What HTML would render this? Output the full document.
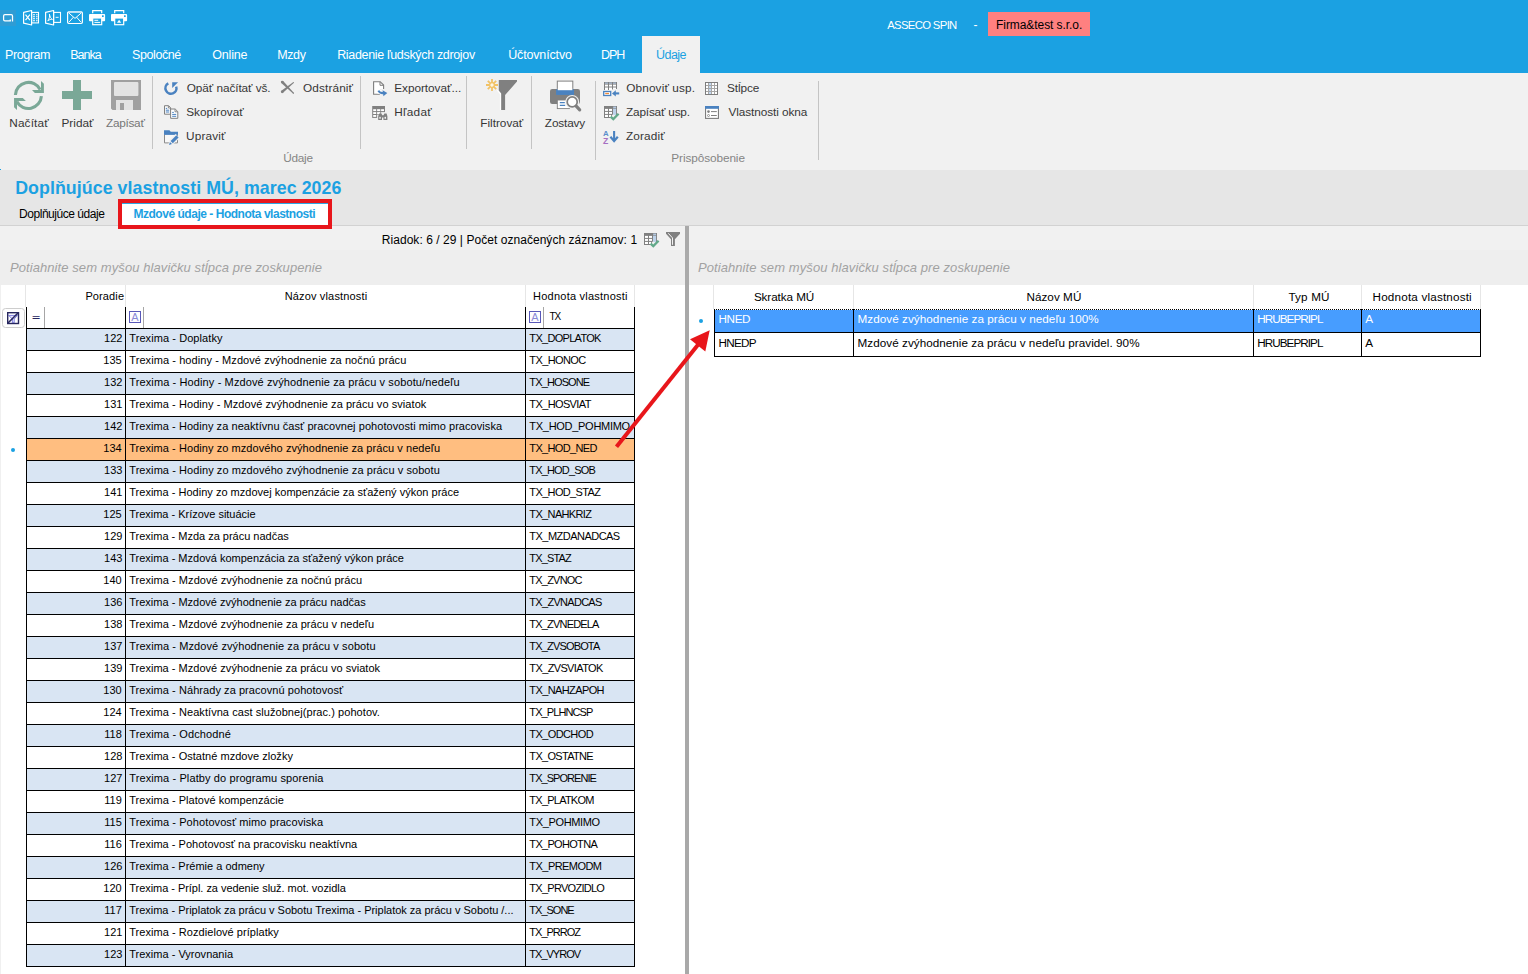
<!DOCTYPE html>
<html lang="sk"><head><meta charset="utf-8"><title>ASSECO SPIN - Doplňujúce vlastnosti MÚ</title>
<style>
html,body{margin:0;padding:0}
body{width:1528px;height:974px;position:relative;overflow:hidden;background:#fff;font-family:'Liberation Sans',sans-serif;font-size:12px;color:#000}
.t{position:absolute;white-space:pre;display:block;height:20px;line-height:20px}
.b{position:absolute;display:block}
svg{position:absolute;overflow:visible}
</style></head><body>

<div class="b" style="left:0px;top:0px;width:1528px;height:73px;background:#1ba1e2;"></div>
<div class="b" style="left:0px;top:73px;width:1528px;height:97px;background:#f1f1f1;"></div>
<div class="b" style="left:0px;top:170px;width:1528px;height:55px;background:#e6e6e6;"></div>
<div class="b" style="left:0px;top:225px;width:1528px;height:1px;background:#d2d2d2;"></div>
<div class="b" style="left:0px;top:226px;width:1528px;height:24px;background:#f1f1f1;"></div>
<div class="b" style="left:0px;top:250px;width:1528px;height:35px;background:#eeeeee;"></div>
<div class="b" style="left:0px;top:285px;width:1px;height:689px;background:#f0f0f0;"></div>
<div class="b" style="left:0px;top:169px;width:1px;height:1px;background:#1ba1e2;"></div>
<div class="b" style="left:0px;top:10px;width:16px;height:16px;background:#2f9cd4;"></div>
<svg style="left:0px;top:10px" width="16" height="16" viewBox="0 0 16 16"><path d="M3.6 5.9Q3.6 4.6 4.9 4.6H11.2Q12.5 4.6 12.5 5.9V11.6M3.6 5.9V9.6Q3.6 10.9 4.9 10.9H10.3V9.6" fill="none" stroke="#fff" stroke-width="1.25"/></svg>
<svg style="left:23px;top:10px" width="16" height="16" viewBox="0 0 16 16"><path d="M0.6 2.3L8.6 0.5V15L0.6 13.2Z" fill="none" stroke="#fff" stroke-width="1.2" stroke-linejoin="round"/><path d="M2.5 4.7L6.9 10.1M6.9 4.7L2.5 10.1" stroke="#fff" stroke-width="1.2" fill="none"/><rect x="8.6" y="2.4" width="6.9" height="10.5" fill="none" stroke="#fff" stroke-width="1.1"/><path d="M10 4.7h2M13 4.7h1.6M10 6.7h2M13 6.7h1.6M10 8.7h2M13 8.7h1.6M10 10.7h2M13 10.7h1.6" stroke="#fff" stroke-width="1.1"/></svg>
<svg style="left:45px;top:10px" width="16" height="16" viewBox="0 0 16 16"><path d="M0.6 2.3L8.6 0.5V15L0.6 13.2Z" fill="none" stroke="#fff" stroke-width="1.2" stroke-linejoin="round"/><path d="M4.4 4.2c.8 2.2-.4 5-1.6 6.6c1.6-1.2 3.2-1.6 4.6-1.4c-1.4-.8-2.6-2.6-3-5.2z" fill="none" stroke="#fff" stroke-width="1"/><rect x="8.6" y="2.4" width="6.9" height="10" fill="none" stroke="#fff" stroke-width="1.1"/><path d="M10.6 7.4h3" stroke="#cfeaf8" stroke-width="1.2"/></svg>
<svg style="left:67px;top:11px" width="16" height="14" viewBox="0 0 16 14"><rect x="0.6" y="0.9" width="14.8" height="11.6" rx="1.2" fill="none" stroke="#fff" stroke-width="1.2"/><path d="M1 1.2h14" stroke="#bfe3f6" stroke-width="1.4"/><path d="M1.6 1.8L8 7.4L14.4 1.8M1.8 11.4L6.4 6.2M14.2 11.4L9.6 6.2" fill="none" stroke="#fff" stroke-width="1"/></svg>
<svg style="left:89px;top:10px" width="16" height="16" viewBox="0 0 16 16"><path d="M3.7 3.2V0.7H12.7V3.2" fill="none" stroke="#fff" stroke-width="1.2"/><rect x="0" y="4" width="16.1" height="7.2" rx="0.9" fill="#fff"/><rect x="13" y="5.3" width="1.7" height="1.7" fill="#1ba1e2"/><rect x="3.7" y="8" width="9" height="6.7" fill="#1ba1e2" stroke="#fff" stroke-width="1.2"/><path d="M5.4 10.3h3.8M5.4 12.4h5.8" stroke="#fff" stroke-width="1"/></svg>
<svg style="left:111px;top:10px" width="16" height="16" viewBox="0 0 16 16"><path d="M3.7 3.2V0.7H12.7V3.2" fill="none" stroke="#fff" stroke-width="1.2"/><rect x="0" y="4" width="16.1" height="7.2" rx="0.9" fill="#fff"/><rect x="13" y="5.3" width="1.7" height="1.7" fill="#1ba1e2"/><rect x="3.7" y="8" width="9" height="6.7" fill="#1ba1e2" stroke="#fff" stroke-width="1.2"/><path d="M6 12.8L8.1 9.8L10.2 12.8Z" fill="#fff"/></svg>
<svg style="left:13px;top:80px" width="32" height="32" viewBox="0 0 32 32"><path d="M2.4 15A13.1 13.1 0 0 1 27.2 9.6" fill="none" stroke="#7aa897" stroke-width="3.1"/><path d="M28 0.9L30.9 3.8V13H21.9L19 9.9H28Z" fill="#7aa897"/><path d="M28.4 16.1A13.1 13.1 0 0 1 3.8 21.6" fill="none" stroke="#7aa897" stroke-width="3.1"/><path d="M1.05 18H9.8L12.9 21H4V29.9L1.05 27.2Z" fill="#7aa897"/></svg>
<div class="b" style="left:73px;top:80px;width:8px;height:30px;background:#7aa897;"></div>
<div class="b" style="left:62px;top:91px;width:30px;height:8px;background:#7aa897;"></div>
<svg style="left:111px;top:80px" width="30" height="30" viewBox="0 0 30 30"><path d="M0 0H30V30H1.6L0 28.4Z" fill="#a0a0a0"/><rect x="3" y="2" width="24.4" height="14" rx="1" fill="#e3e3e3"/><rect x="5" y="20" width="17" height="10" fill="#e3e3e3"/><rect x="9" y="23" width="4" height="7" fill="#a0a0a0"/></svg>
<svg style="left:164px;top:81px" width="16" height="16" viewBox="0 0 16 16"><path d="M12.2 5.6A5.5 5.5 0 1 1 4.3 2.4" fill="none" stroke="#4a82c0" stroke-width="2.5"/><path d="M8.2 1.2H14.1L8.2 7.1Z" fill="#4a82c0"/></svg>
<svg style="left:279.4px;top:80.4px" width="16" height="16" viewBox="0 0 16 16"><polygon points="2.25,2.95 13.98,13.62 14.82,12.78 4.15,1.05" fill="#808080"/><circle cx="3.2" cy="2" r="1.35" fill="#808080"/><circle cx="14.4" cy="13.2" r="0.6" fill="#808080"/><polygon points="4.06,12.84 14.72,2.99 14.08,2.21 2.34,10.76" fill="#808080"/><circle cx="3.2" cy="11.8" r="1.35" fill="#808080"/><circle cx="14.4" cy="2.6" r="0.5" fill="#808080"/></svg>
<svg style="left:164px;top:105px" width="16" height="16" viewBox="0 0 16 16"><path d="M0.5 0.7H4.6L6.6 2.7V9.2H0.5Z" fill="#fbfbfb" stroke="#808080"/><path d="M4.4 0.9V3H6.4" fill="none" stroke="#808080" stroke-width="0.9"/><path d="M1.8 3.4h1.4M1.8 5.2h3.4M1.8 7h3.4" stroke="#4a82c0" stroke-width="1"/><path d="M6.6 4H11.2L13.8 6.6V13.3H6.6Z" fill="#fff" stroke="#808080"/><path d="M11 4.2V6.8H13.6" fill="none" stroke="#808080" stroke-width="0.9"/><path d="M8.2 7.4h1.6M8.2 9.4h4M8.2 11.3h4" stroke="#4a82c0" stroke-width="1"/></svg>
<svg style="left:164px;top:130px" width="16" height="16" viewBox="0 0 16 16"><path d="M0 0.2H5.4L6.8 1.8H14V4.9H0Z" fill="#4a82c0"/><path d="M0.5 4.9V12.9H13.5V4.9" fill="#f8f8f8" stroke="#8a8a8a"/><path d="M4.2 14.6L5.8 9.8L11.6 4L15.6 8L9.8 13.8Z" fill="#f1f1f1"/><path d="M6.6 11L12.4 5.2L14.6 7.4L8.8 13.2Z" fill="#4a82c0"/><path d="M5.9 11.9L8 14L5 14.9Z" fill="#4a82c0"/></svg>
<svg style="left:372px;top:81px" width="16" height="16" viewBox="0 0 16 16"><path d="M1.6 0.7H8.2L11.6 4.1V13.3H1.6Z" fill="#fff" stroke="#7d7d7d" stroke-width="1.1"/><path d="M8 0.9V4.3H11.4" fill="none" stroke="#7d7d7d" stroke-width="1"/><rect x="7.8" y="8" width="8" height="7.6" fill="#f1f1f1"/><rect x="5.4" y="9" width="4" height="3.6" fill="#fff"/><path d="M6.4 9.6C7.4 11.8 9.6 12.4 12.4 12" fill="none" stroke="#4a82c0" stroke-width="2.1"/><path d="M10.6 9.2L15.3 12L11.4 15.2Z" fill="#4a82c0"/></svg>
<svg style="left:372px;top:106px" width="16" height="16" viewBox="0 0 16 16"><rect x="0.2" y="0" width="12.8" height="11.9" fill="#808080"/><rect x="1.2" y="3.2" width="3" height="1.9" fill="#fff"/><rect x="5.1" y="3.2" width="3.2" height="1.9" fill="#fff"/><rect x="9.1" y="3.2" width="2.9" height="1.9" fill="#fff"/><rect x="1.2" y="6.1" width="3" height="1.9" fill="#fff"/><rect x="5.1" y="6.1" width="3.2" height="1.9" fill="#fff"/><rect x="9.1" y="6.1" width="3.9" height="3" fill="#f1f1f1"/><rect x="1.2" y="9" width="3" height="1.9" fill="#fff"/><rect x="5.1" y="8.6" width="8" height="3.6" fill="#f1f1f1"/><path d="M7.2 7.6h2.2l.9 1.6h1.2l.9-1.6h2.2l.8 2.6V14H11.4V11.6H10V14H6.2V10.2Z" fill="#808080"/><rect x="7.3" y="10.8" width="1.5" height="2" rx="0.6" fill="#f4f4f4"/><rect x="12.5" y="10.8" width="1.5" height="2" rx="0.6" fill="#f4f4f4"/></svg>
<svg style="left:485px;top:79px" width="33" height="32" viewBox="0 0 33 32"><path d="M13.8 1H32V2.6L20.1 16V31H16.1V14.4L13.8 11.8Z" fill="#808080"/><path d="M12.2 11.2L15.5 14.8V31" fill="none" stroke="#fff" stroke-width="1.2"/><g stroke="#f1c266" stroke-width="1.8" fill="none"><path d="M7 0V12M1 6H13M2.8 1.8L11.2 10.2M11.2 1.8L2.8 10.2"/></g><circle cx="7" cy="6" r="2.3" fill="#fdf6e4" stroke="#f1c266" stroke-width="1.2"/></svg>
<svg style="left:548px;top:80px" width="34" height="32" viewBox="0 0 34 32"><rect x="2" y="9" width="30" height="15" rx="2.2" fill="#808080"/><rect x="9.3" y="1.1" width="15.5" height="9" fill="#fff" stroke="#808080" stroke-width="1"/><rect x="8.1" y="9.4" width="17.9" height="5.5" fill="#4a82c0"/><rect x="9.8" y="8.6" width="14.5" height="1.6" fill="#fff"/><rect x="9.3" y="20" width="12.2" height="8.6" fill="#fff" stroke="#808080" stroke-width="0.9"/><path d="M11.8 22.6h5M11.8 25.4h5.4" stroke="#4a82c0" stroke-width="1.1"/><circle cx="24.2" cy="21.9" r="7" fill="#f1f1f1"/><path d="M27.8 25.6L31.7 29.8" stroke="#808080" stroke-width="3.2" stroke-linecap="round"/><circle cx="24.2" cy="21.9" r="5" fill="#fff" stroke="#808080" stroke-width="1.7"/></svg>
<svg style="left:603px;top:81px" width="17" height="16" viewBox="0 0 17 16"><rect x="1" y="1" width="13" height="8" fill="#808080"/><rect x="2" y="1.6" width="3" height="1" fill="#b9d0ec"/><rect x="6" y="1.6" width="3" height="1" fill="#b9d0ec"/><rect x="10" y="1.6" width="3" height="1" fill="#b9d0ec"/><rect x="2" y="3.6" width="3" height="1.9" fill="#fff"/><rect x="6" y="3.6" width="3" height="1.9" fill="#fff"/><rect x="10" y="3.6" width="3" height="1.9" fill="#fff"/><rect x="2" y="6.5" width="3" height="2.6" fill="#fff"/><rect x="6" y="6.5" width="3" height="2.6" fill="#fff"/><rect x="10" y="6.5" width="3" height="1.5" fill="#fff"/><rect x="9.4" y="8" width="5" height="1.4" fill="#f1f1f1"/><rect x="0.7" y="10.5" width="7" height="4" fill="#fff" stroke="#4a82c0" stroke-width="1.3"/><path d="M2.2 12.5h3.8" stroke="#f08a3a" stroke-width="1.3"/><path d="M16.2 12.4H11.6" stroke="#4a82c0" stroke-width="2.1"/><path d="M9 12.4L12.8 9.2V15.6Z" fill="#4a82c0"/></svg>
<svg style="left:604px;top:106px" width="16" height="16" viewBox="0 0 16 16"><rect x="0" y="0" width="13" height="12" fill="#808080"/><rect x="9.2" y="0.6" width="2.9" height="1.3" fill="#b9d0ec"/><rect x="1" y="2.9" width="3" height="2" fill="#fff"/><rect x="5" y="2.9" width="3" height="2" fill="#fff"/><rect x="1" y="5.9" width="3" height="2" fill="#fff"/><rect x="5" y="5.9" width="3" height="2" fill="#fff"/><rect x="1" y="8.9" width="3" height="2.1" fill="#fff"/><rect x="5" y="8.9" width="2" height="2.1" fill="#fff"/><rect x="9" y="2.6" width="3.1" height="6.6" fill="#bcd2ea"/><path d="M5.6 12.4L8.6 8.6L13.4 9.4V12.4Z" fill="#f1f1f1"/><path d="M6.6 10.6L9.3 13.1L14.6 7.8" fill="none" stroke="#62a98a" stroke-width="2.3"/></svg>
<svg style="left:603px;top:129px" width="17" height="16" viewBox="0 0 17 16"><text x="0" y="6.9" font-family="Liberation Sans, sans-serif" font-size="7.8" font-weight="bold" fill="#5b8fcc">A</text><text x="0" y="14.6" font-family="Liberation Sans, sans-serif" font-size="8.6" font-weight="bold" fill="#a56fc2">Z</text><path d="M11.1 2V11.4" stroke="#4a82c0" stroke-width="2.1"/><path d="M7.4 7.8L11.1 12L14.8 7.8" fill="none" stroke="#4a82c0" stroke-width="2.2"/></svg>
<svg style="left:705px;top:82px" width="14" height="14" viewBox="0 0 14 14"><rect x="0" y="0" width="13" height="13" fill="#a6a6a6"/><rect x="0.5" y="0.5" width="12" height="12" fill="none" stroke="#7d7d7d" stroke-width="1"/><rect x="1" y="1" width="2" height="2" fill="#fff"/><rect x="4" y="1" width="2" height="2" fill="#c2d9f3"/><rect x="7" y="1" width="2" height="2" fill="#fff"/><rect x="10" y="1" width="2" height="2" fill="#fff"/><rect x="1" y="4" width="2" height="2" fill="#fff"/><rect x="4" y="4" width="2" height="2" fill="#c2d9f3"/><rect x="7" y="4" width="2" height="2" fill="#fff"/><rect x="10" y="4" width="2" height="2" fill="#fff"/><rect x="1" y="7" width="2" height="2" fill="#fff"/><rect x="4" y="7" width="2" height="2" fill="#c2d9f3"/><rect x="7" y="7" width="2" height="2" fill="#fff"/><rect x="10" y="7" width="2" height="2" fill="#fff"/><rect x="1" y="10" width="2" height="2" fill="#fff"/><rect x="4" y="10" width="2" height="2" fill="#c2d9f3"/><rect x="7" y="10" width="2" height="2" fill="#fff"/><rect x="10" y="10" width="2" height="2" fill="#fff"/></svg>
<svg style="left:705px;top:106px" width="15" height="14" viewBox="0 0 15 14"><rect x="0.55" y="0.6" width="12.9" height="11.8" fill="#fff" stroke="#7d7d7d" stroke-width="1.1"/><rect x="0" y="0" width="14" height="2.8" fill="#4a82c0"/><circle cx="3.5" cy="5.6" r="1.3" fill="#808080"/><circle cx="3.5" cy="9.5" r="1" fill="#fff" stroke="#808080" stroke-width="0.8"/><path d="M6 5.6H11.8M6 9.5H11.8" stroke="#808080" stroke-width="1"/></svg>
<svg style="left:644px;top:233px" width="16" height="16" viewBox="0 0 16 16"><rect x="0" y="0" width="13" height="12" fill="#808080"/><rect x="9.2" y="0.6" width="2.9" height="1.3" fill="#b9d0ec"/><rect x="1" y="2.9" width="3" height="2" fill="#fff"/><rect x="5" y="2.9" width="3" height="2" fill="#fff"/><rect x="1" y="5.9" width="3" height="2" fill="#fff"/><rect x="5" y="5.9" width="3" height="2" fill="#fff"/><rect x="1" y="8.9" width="3" height="2.1" fill="#fff"/><rect x="5" y="8.9" width="2" height="2.1" fill="#fff"/><rect x="9" y="2.6" width="3.1" height="6.6" fill="#bcd2ea"/><path d="M5.6 12.4L8.6 8.6L13.4 9.4V12.4Z" fill="#f1f1f1"/><path d="M6.6 10.6L9.3 13.1L14.6 7.8" fill="none" stroke="#62a98a" stroke-width="2.3"/></svg>
<svg style="left:666px;top:232px" width="15" height="15" viewBox="0 0 15 15"><path d="M0 0H14V1.7L8.9 7.2V14H5V7.2L0 1.7Z" fill="#808080"/><path d="M2.3 1.3L6.5 5.9V12.8" fill="none" stroke="#fff" stroke-width="0.9"/></svg>
<span class="t" style="left:887.22px;top:15px;font-size:11.3px;font-weight:normal;letter-spacing:-0.653px;color:#fff;">ASSECO SPIN</span>
<span class="t" style="left:973.58px;top:15px;font-size:12px;font-weight:normal;color:#fff;">-</span>
<div class="b" style="left:988px;top:12px;width:102px;height:24px;background:#ff8080;"></div>
<span class="t" style="left:996.07px;top:15px;font-size:12px;font-weight:normal;letter-spacing:-0.073px;color:#000;">Firma&amp;test s.r.o.</span>
<span class="t" style="left:5.06px;top:45px;font-size:12.5px;font-weight:normal;letter-spacing:-0.436px;color:#fff;">Program</span>
<span class="t" style="left:70.26px;top:45px;font-size:12.5px;font-weight:normal;letter-spacing:-1.014px;color:#fff;">Banka</span>
<span class="t" style="left:132.12px;top:45px;font-size:12.5px;font-weight:normal;letter-spacing:-0.437px;color:#fff;">Spoločné</span>
<span class="t" style="left:212.16px;top:45px;font-size:12.5px;font-weight:normal;letter-spacing:-0.160px;color:#fff;">Online</span>
<span class="t" style="left:277.16px;top:45px;font-size:12.5px;font-weight:normal;letter-spacing:-0.355px;color:#fff;">Mzdy</span>
<span class="t" style="left:337.16px;top:45px;font-size:12.5px;font-weight:normal;letter-spacing:-0.337px;color:#fff;">Riadenie ľudských zdrojov</span>
<span class="t" style="left:508.19px;top:45px;font-size:12.5px;font-weight:normal;letter-spacing:-0.156px;color:#fff;">Účtovníctvo</span>
<span class="t" style="left:601.06px;top:45px;font-size:12.5px;font-weight:normal;letter-spacing:-1.072px;color:#fff;">DPH</span>
<div class="b" style="left:642px;top:36px;width:58px;height:37px;background:#f1f1f1;"></div>
<span class="t" style="left:656.09px;top:45px;font-size:12.5px;font-weight:normal;letter-spacing:-0.551px;color:#1ba1e2;">Údaje</span>
<div class="b" style="left:152px;top:76px;width:1px;height:73px;background:#c4c4c4;"></div>
<div class="b" style="left:360px;top:76px;width:1px;height:73px;background:#c4c4c4;"></div>
<div class="b" style="left:466px;top:76px;width:1px;height:73px;background:#c4c4c4;"></div>
<div class="b" style="left:531px;top:76px;width:1px;height:73px;background:#c4c4c4;"></div>
<div class="b" style="left:595px;top:81px;width:1px;height:79px;background:#c4c4c4;"></div>
<div class="b" style="left:818px;top:81px;width:1px;height:79px;background:#c4c4c4;"></div>
<span class="t" style="left:9.29px;top:113px;font-size:11.8px;font-weight:normal;letter-spacing:0.125px;color:#363636;">Načítať</span>
<span class="t" style="left:61.49px;top:113px;font-size:11.8px;font-weight:normal;color:#363636;">Pridať</span>
<span class="t" style="left:105.94px;top:113px;font-size:11.8px;font-weight:normal;letter-spacing:-0.264px;color:#767676;">Zapísať</span>
<span class="t" style="left:480.19px;top:113px;font-size:11.8px;font-weight:normal;color:#363636;">Filtrovať</span>
<span class="t" style="left:544.84px;top:113px;font-size:11.8px;font-weight:normal;letter-spacing:-0.151px;color:#363636;">Zostavy</span>
<span class="t" style="left:186.76px;top:78px;font-size:11.8px;font-weight:normal;letter-spacing:-0.070px;color:#363636;">Opäť načítať vš.</span>
<span class="t" style="left:303.06px;top:78px;font-size:11.8px;font-weight:normal;letter-spacing:0.116px;color:#363636;">Odstrániť</span>
<span class="t" style="left:186.18px;top:102px;font-size:11.8px;font-weight:normal;color:#363636;">Skopírovať</span>
<span class="t" style="left:186.12px;top:126px;font-size:11.8px;font-weight:normal;letter-spacing:0.125px;color:#363636;">Upraviť</span>
<span class="t" style="left:394.19px;top:78px;font-size:11.8px;font-weight:normal;letter-spacing:-0.032px;color:#363636;">Exportovať...</span>
<span class="t" style="left:394.19px;top:102px;font-size:11.8px;font-weight:normal;letter-spacing:0.279px;color:#363636;">Hľadať</span>
<span class="t" style="left:626.26px;top:78px;font-size:11.8px;font-weight:normal;letter-spacing:0.129px;color:#363636;">Obnoviť usp.</span>
<span class="t" style="left:626.04px;top:102px;font-size:11.8px;font-weight:normal;letter-spacing:-0.189px;color:#363636;">Zapísať usp.</span>
<span class="t" style="left:625.94px;top:126px;font-size:11.8px;font-weight:normal;letter-spacing:0.134px;color:#363636;">Zoradiť</span>
<span class="t" style="left:726.98px;top:78px;font-size:11.8px;font-weight:normal;letter-spacing:-0.094px;color:#363636;">Stĺpce</span>
<span class="t" style="left:728.42px;top:102px;font-size:11.8px;font-weight:normal;letter-spacing:-0.078px;color:#363636;">Vlastnosti okna</span>
<span class="t" style="left:283.22px;top:148px;font-size:11.8px;font-weight:normal;letter-spacing:-0.254px;color:#858585;">Údaje</span>
<span class="t" style="left:671.29px;top:148px;font-size:11.8px;font-weight:normal;letter-spacing:-0.091px;color:#858585;">Prispôsobenie</span>
<span class="t" style="left:15.20px;top:178px;font-size:17.8px;font-weight:bold;letter-spacing:0.060px;color:#1ba1e2;">Doplňujúce vlastnosti MÚ, marec 2026</span>
<span class="t" style="left:19.07px;top:204px;font-size:12px;font-weight:normal;letter-spacing:-0.466px;color:#000;">Doplňujúce údaje</span>
<div class="b" style="left:118px;top:199px;width:214px;height:30px;background:#fff;box-sizing:border-box;border:4px solid #e8161b;"></div>
<div class="b" style="left:122px;top:203px;width:206px;height:1px;background:#2ea8e4;"></div>
<span class="t" style="left:133.48px;top:204px;font-size:12px;font-weight:bold;letter-spacing:-0.475px;color:#1ba1e2;">Mzdové údaje - Hodnota vlastnosti</span>
<span class="t" style="left:381.77px;top:230px;font-size:12px;font-weight:normal;letter-spacing:0.046px;color:#000;">Riadok: 6 / 29 | Počet označených záznamov: 1</span>
<span class="t" style="left:9.91px;top:258px;font-size:13px;font-weight:normal;font-style:italic;letter-spacing:0.086px;color:#a2a2a2;">Potiahnite sem myšou hlavičku stĺpca pre zoskupenie</span>
<span class="t" style="left:697.91px;top:258px;font-size:13px;font-weight:normal;font-style:italic;letter-spacing:0.086px;color:#a2a2a2;">Potiahnite sem myšou hlavičku stĺpca pre zoskupenie</span>
<div class="b" style="left:685px;top:226px;width:4px;height:748px;background:#a9a9a9;"></div>
<span class="t" style="left:85.42px;top:286px;font-size:11px;font-weight:normal;letter-spacing:0.112px;color:#000;">Poradie</span>
<span class="t" style="left:284.72px;top:286px;font-size:11px;font-weight:normal;letter-spacing:0.153px;color:#000;">Názov vlastnosti</span>
<span class="t" style="left:533.12px;top:286px;font-size:11px;font-weight:normal;letter-spacing:0.224px;color:#000;">Hodnota vlastnosti</span>
<div class="b" style="left:25px;top:285px;width:1px;height:22px;background:#e6e6e6;"></div>
<div class="b" style="left:125px;top:285px;width:1px;height:22px;background:#e6e6e6;"></div>
<div class="b" style="left:525px;top:285px;width:1px;height:22px;background:#e6e6e6;"></div>
<div class="b" style="left:634px;top:285px;width:1px;height:22px;background:#e6e6e6;"></div>
<div class="b" style="left:44px;top:307px;width:1px;height:21px;background:#a6a6a6;"></div>
<div class="b" style="left:143px;top:307px;width:1px;height:21px;background:#a6a6a6;"></div>
<div class="b" style="left:543px;top:307px;width:1px;height:21px;background:#a6a6a6;"></div>
<span class="t" style="left:32px;top:307.5px;font-size:8px;font-weight:bold;color:#26265e;transform:scale(1.75,1);transform-origin:0 50%;">=</span>
<span class="t" style="left:549.58px;top:307px;font-size:10px;font-weight:normal;letter-spacing:-1.112px;color:#000;">TX</span>
<div class="b" style="left:27px;top:329px;width:607px;height:21px;background:#d9e5f3;"></div>
<span class="t" style="left:104.09px;top:328px;font-size:11px;font-weight:normal;color:#000;">122</span>
<span class="t" style="left:129.26px;top:328px;font-size:11px;font-weight:normal;letter-spacing:0.079px;color:#000;">Trexima - Doplatky</span>
<span class="t" style="left:529.36px;top:328px;font-size:11px;font-weight:normal;letter-spacing:-0.701px;color:#000;">TX_DOPLATOK</span>
<span class="t" style="left:103.37px;top:350px;font-size:11px;font-weight:normal;color:#000;">135</span>
<span class="t" style="left:129.26px;top:350px;font-size:11px;font-weight:normal;letter-spacing:0.081px;color:#000;">Trexima - hodiny - Mzdové zvýhodnenie za nočnú prácu</span>
<span class="t" style="left:529.36px;top:350px;font-size:11px;font-weight:normal;letter-spacing:-0.622px;color:#000;">TX_HONOC</span>
<div class="b" style="left:27px;top:373px;width:607px;height:21px;background:#d9e5f3;"></div>
<span class="t" style="left:104.09px;top:372px;font-size:11px;font-weight:normal;color:#000;">132</span>
<span class="t" style="left:129.26px;top:372px;font-size:11px;font-weight:normal;letter-spacing:0.118px;color:#000;">Trexima - Hodiny - Mzdové zvýhodnenie za prácu v sobotu/nedeľu</span>
<span class="t" style="left:529.36px;top:372px;font-size:11px;font-weight:normal;letter-spacing:-0.878px;color:#000;">TX_HOSONE</span>
<span class="t" style="left:104.12px;top:394px;font-size:11px;font-weight:normal;color:#000;">131</span>
<span class="t" style="left:129.26px;top:394px;font-size:11px;font-weight:normal;letter-spacing:0.061px;color:#000;">Trexima - Hodiny - Mzdové zvýhodnenie za prácu vo sviatok</span>
<span class="t" style="left:529.36px;top:394px;font-size:11px;font-weight:normal;letter-spacing:-0.627px;color:#000;">TX_HOSVIAT</span>
<div class="b" style="left:27px;top:417px;width:607px;height:21px;background:#d9e5f3;"></div>
<span class="t" style="left:104.09px;top:416px;font-size:11px;font-weight:normal;color:#000;">142</span>
<span class="t" style="left:129.26px;top:416px;font-size:11px;font-weight:normal;letter-spacing:0.058px;color:#000;">Trexima - Hodiny za neaktívnu časť pracovnej pohotovosti mimo pracoviska</span>
<span class="t" style="left:529.36px;top:416px;font-size:11px;font-weight:normal;letter-spacing:-0.290px;color:#000;">TX_HOD_POHMIMO</span>
<div class="b" style="left:27px;top:439px;width:607px;height:21px;background:#ffbe80;"></div>
<span class="t" style="left:103.31px;top:438px;font-size:11px;font-weight:normal;color:#000;">134</span>
<span class="t" style="left:129.26px;top:438px;font-size:11px;font-weight:normal;letter-spacing:0.062px;color:#000;">Trexima - Hodiny zo mzdového zvýhodnenie za prácu v nedeľu</span>
<span class="t" style="left:529.36px;top:438px;font-size:11px;font-weight:normal;letter-spacing:-0.664px;color:#000;">TX_HOD_NED</span>
<div class="b" style="left:27px;top:461px;width:607px;height:21px;background:#d9e5f3;"></div>
<span class="t" style="left:104.09px;top:460px;font-size:11px;font-weight:normal;color:#000;">133</span>
<span class="t" style="left:129.26px;top:460px;font-size:11px;font-weight:normal;letter-spacing:0.070px;color:#000;">Trexima - Hodiny zo mzdového zvýhodnenie za prácu v sobotu</span>
<span class="t" style="left:529.36px;top:460px;font-size:11px;font-weight:normal;letter-spacing:-0.839px;color:#000;">TX_HOD_SOB</span>
<span class="t" style="left:104.12px;top:482px;font-size:11px;font-weight:normal;color:#000;">141</span>
<span class="t" style="left:129.26px;top:482px;font-size:11px;font-weight:normal;letter-spacing:0.015px;color:#000;">Trexima - Hodiny zo mzdovej kompenzácie za sťažený výkon práce</span>
<span class="t" style="left:529.36px;top:482px;font-size:11px;font-weight:normal;letter-spacing:-0.644px;color:#000;">TX_HOD_STAZ</span>
<div class="b" style="left:27px;top:505px;width:607px;height:21px;background:#d9e5f3;"></div>
<span class="t" style="left:103.37px;top:504px;font-size:11px;font-weight:normal;color:#000;">125</span>
<span class="t" style="left:129.26px;top:504px;font-size:11px;font-weight:normal;letter-spacing:-0.016px;color:#000;">Trexima - Krízove situácie</span>
<span class="t" style="left:529.36px;top:504px;font-size:11px;font-weight:normal;letter-spacing:-0.649px;color:#000;">TX_NAHKRIZ</span>
<span class="t" style="left:104.06px;top:526px;font-size:11px;font-weight:normal;color:#000;">129</span>
<span class="t" style="left:129.26px;top:526px;font-size:11px;font-weight:normal;letter-spacing:-0.009px;color:#000;">Trexima - Mzda za prácu nadčas</span>
<span class="t" style="left:529.36px;top:526px;font-size:11px;font-weight:normal;letter-spacing:-0.528px;color:#000;">TX_MZDANADCAS</span>
<div class="b" style="left:27px;top:549px;width:607px;height:21px;background:#d9e5f3;"></div>
<span class="t" style="left:104.09px;top:548px;font-size:11px;font-weight:normal;color:#000;">143</span>
<span class="t" style="left:129.26px;top:548px;font-size:11px;font-weight:normal;letter-spacing:0.002px;color:#000;">Trexima - Mzdová kompenzácia za sťažený výkon práce</span>
<span class="t" style="left:529.36px;top:548px;font-size:11px;font-weight:normal;letter-spacing:-0.840px;color:#000;">TX_STAZ</span>
<span class="t" style="left:103.37px;top:570px;font-size:11px;font-weight:normal;color:#000;">140</span>
<span class="t" style="left:129.26px;top:570px;font-size:11px;font-weight:normal;letter-spacing:0.053px;color:#000;">Trexima - Mzdové zvýhodnenie za nočnú prácu</span>
<span class="t" style="left:529.36px;top:570px;font-size:11px;font-weight:normal;letter-spacing:-0.789px;color:#000;">TX_ZVNOC</span>
<div class="b" style="left:27px;top:593px;width:607px;height:21px;background:#d9e5f3;"></div>
<span class="t" style="left:104.09px;top:592px;font-size:11px;font-weight:normal;color:#000;">136</span>
<span class="t" style="left:129.26px;top:592px;font-size:11px;font-weight:normal;letter-spacing:0.006px;color:#000;">Trexima - Mzdové zvýhodnenie za prácu nadčas</span>
<span class="t" style="left:529.36px;top:592px;font-size:11px;font-weight:normal;letter-spacing:-0.710px;color:#000;">TX_ZVNADCAS</span>
<span class="t" style="left:104.09px;top:614px;font-size:11px;font-weight:normal;color:#000;">138</span>
<span class="t" style="left:129.26px;top:614px;font-size:11px;font-weight:normal;letter-spacing:0.040px;color:#000;">Trexima - Mzdové zvýhodnenie za prácu v nedeľu</span>
<span class="t" style="left:529.36px;top:614px;font-size:11px;font-weight:normal;letter-spacing:-0.817px;color:#000;">TX_ZVNEDELA</span>
<div class="b" style="left:27px;top:637px;width:607px;height:21px;background:#d9e5f3;"></div>
<span class="t" style="left:104.03px;top:636px;font-size:11px;font-weight:normal;color:#000;">137</span>
<span class="t" style="left:129.26px;top:636px;font-size:11px;font-weight:normal;letter-spacing:0.089px;color:#000;">Trexima - Mzdové zvýhodnenie za prácu v sobotu</span>
<span class="t" style="left:529.36px;top:636px;font-size:11px;font-weight:normal;letter-spacing:-0.836px;color:#000;">TX_ZVSOBOTA</span>
<span class="t" style="left:104.06px;top:658px;font-size:11px;font-weight:normal;color:#000;">139</span>
<span class="t" style="left:129.26px;top:658px;font-size:11px;font-weight:normal;letter-spacing:0.025px;color:#000;">Trexima - Mzdové zvýhodnenie za prácu vo sviatok</span>
<span class="t" style="left:529.36px;top:658px;font-size:11px;font-weight:normal;letter-spacing:-0.634px;color:#000;">TX_ZVSVIATOK</span>
<div class="b" style="left:27px;top:681px;width:607px;height:21px;background:#d9e5f3;"></div>
<span class="t" style="left:103.37px;top:680px;font-size:11px;font-weight:normal;color:#000;">130</span>
<span class="t" style="left:129.26px;top:680px;font-size:11px;font-weight:normal;letter-spacing:0.061px;color:#000;">Trexima - Náhrady za pracovnú pohotovosť</span>
<span class="t" style="left:529.36px;top:680px;font-size:11px;font-weight:normal;letter-spacing:-0.609px;color:#000;">TX_NAHZAPOH</span>
<span class="t" style="left:103.31px;top:702px;font-size:11px;font-weight:normal;color:#000;">124</span>
<span class="t" style="left:129.26px;top:702px;font-size:11px;font-weight:normal;letter-spacing:0.062px;color:#000;">Trexima - Neaktívna cast služobnej(prac.) pohotov.</span>
<span class="t" style="left:529.36px;top:702px;font-size:11px;font-weight:normal;letter-spacing:-0.915px;color:#000;">TX_PLHNCSP</span>
<div class="b" style="left:27px;top:725px;width:607px;height:21px;background:#d9e5f3;"></div>
<span class="t" style="left:104.28px;top:724px;font-size:11px;font-weight:normal;color:#000;">118</span>
<span class="t" style="left:129.26px;top:724px;font-size:11px;font-weight:normal;letter-spacing:0.097px;color:#000;">Trexima - Odchodné</span>
<span class="t" style="left:529.36px;top:724px;font-size:11px;font-weight:normal;letter-spacing:-0.603px;color:#000;">TX_ODCHOD</span>
<span class="t" style="left:104.09px;top:746px;font-size:11px;font-weight:normal;color:#000;">128</span>
<span class="t" style="left:129.26px;top:746px;font-size:11px;font-weight:normal;letter-spacing:0.029px;color:#000;">Trexima - Ostatné mzdove zložky</span>
<span class="t" style="left:529.36px;top:746px;font-size:11px;font-weight:normal;letter-spacing:-0.683px;color:#000;">TX_OSTATNE</span>
<div class="b" style="left:27px;top:769px;width:607px;height:21px;background:#d9e5f3;"></div>
<span class="t" style="left:104.03px;top:768px;font-size:11px;font-weight:normal;color:#000;">127</span>
<span class="t" style="left:129.26px;top:768px;font-size:11px;font-weight:normal;letter-spacing:0.107px;color:#000;">Trexima - Platby do programu sporenia</span>
<span class="t" style="left:529.36px;top:768px;font-size:11px;font-weight:normal;letter-spacing:-0.946px;color:#000;">TX_SPORENIE</span>
<span class="t" style="left:104.30px;top:790px;font-size:11px;font-weight:normal;color:#000;">119</span>
<span class="t" style="left:129.26px;top:790px;font-size:11px;font-weight:normal;letter-spacing:0.033px;color:#000;">Trexima - Platové kompenzácie</span>
<span class="t" style="left:529.36px;top:790px;font-size:11px;font-weight:normal;letter-spacing:-0.770px;color:#000;">TX_PLATKOM</span>
<div class="b" style="left:27px;top:813px;width:607px;height:21px;background:#d9e5f3;"></div>
<span class="t" style="left:104.28px;top:812px;font-size:11px;font-weight:normal;color:#000;">115</span>
<span class="t" style="left:129.26px;top:812px;font-size:11px;font-weight:normal;letter-spacing:0.086px;color:#000;">Trexima - Pohotovosť mimo pracoviska</span>
<span class="t" style="left:529.36px;top:812px;font-size:11px;font-weight:normal;letter-spacing:-0.352px;color:#000;">TX_POHMIMO</span>
<span class="t" style="left:104.28px;top:834px;font-size:11px;font-weight:normal;color:#000;">116</span>
<span class="t" style="left:129.26px;top:834px;font-size:11px;font-weight:normal;letter-spacing:0.024px;color:#000;">Trexima - Pohotovosť na pracovisku neaktívna</span>
<span class="t" style="left:529.36px;top:834px;font-size:11px;font-weight:normal;letter-spacing:-0.690px;color:#000;">TX_POHOTNA</span>
<div class="b" style="left:27px;top:857px;width:607px;height:21px;background:#d9e5f3;"></div>
<span class="t" style="left:104.09px;top:856px;font-size:11px;font-weight:normal;color:#000;">126</span>
<span class="t" style="left:129.26px;top:856px;font-size:11px;font-weight:normal;color:#000;">Trexima - Prémie a odmeny</span>
<span class="t" style="left:529.36px;top:856px;font-size:11px;font-weight:normal;letter-spacing:-0.550px;color:#000;">TX_PREMODM</span>
<span class="t" style="left:103.37px;top:878px;font-size:11px;font-weight:normal;color:#000;">120</span>
<span class="t" style="left:129.26px;top:878px;font-size:11px;font-weight:normal;letter-spacing:-0.041px;color:#000;">Trexima - Prípl. za vedenie služ. mot. vozidla</span>
<span class="t" style="left:529.36px;top:878px;font-size:11px;font-weight:normal;letter-spacing:-0.730px;color:#000;">TX_PRVOZIDLO</span>
<div class="b" style="left:27px;top:901px;width:607px;height:21px;background:#d9e5f3;"></div>
<span class="t" style="left:104.31px;top:900px;font-size:11px;font-weight:normal;color:#000;">117</span>
<span class="t" style="left:129.26px;top:900px;font-size:11px;font-weight:normal;letter-spacing:-0.014px;color:#000;">Trexima - Priplatok za prácu v Sobotu Trexima - Priplatok za prácu v Sobotu /...</span>
<span class="t" style="left:529.36px;top:900px;font-size:11px;font-weight:normal;letter-spacing:-1.006px;color:#000;">TX_SONE</span>
<span class="t" style="left:104.12px;top:922px;font-size:11px;font-weight:normal;color:#000;">121</span>
<span class="t" style="left:129.26px;top:922px;font-size:11px;font-weight:normal;letter-spacing:0.050px;color:#000;">Trexima - Rozdielové príplatky</span>
<span class="t" style="left:529.36px;top:922px;font-size:11px;font-weight:normal;letter-spacing:-1.020px;color:#000;">TX_PRROZ</span>
<div class="b" style="left:27px;top:945px;width:607px;height:21px;background:#d9e5f3;"></div>
<span class="t" style="left:104.09px;top:944px;font-size:11px;font-weight:normal;color:#000;">123</span>
<span class="t" style="left:129.26px;top:944px;font-size:11px;font-weight:normal;letter-spacing:0.005px;color:#000;">Trexima - Vyrovnania</span>
<span class="t" style="left:529.36px;top:944px;font-size:11px;font-weight:normal;letter-spacing:-1.003px;color:#000;">TX_VYROV</span>
<div class="b" style="left:26px;top:328px;width:609px;height:1px;background:#000;"></div>
<div class="b" style="left:26px;top:350px;width:609px;height:1px;background:#000;"></div>
<div class="b" style="left:26px;top:372px;width:609px;height:1px;background:#000;"></div>
<div class="b" style="left:26px;top:394px;width:609px;height:1px;background:#000;"></div>
<div class="b" style="left:26px;top:416px;width:609px;height:1px;background:#000;"></div>
<div class="b" style="left:26px;top:438px;width:609px;height:1px;background:#000;"></div>
<div class="b" style="left:26px;top:460px;width:609px;height:1px;background:#000;"></div>
<div class="b" style="left:26px;top:482px;width:609px;height:1px;background:#000;"></div>
<div class="b" style="left:26px;top:504px;width:609px;height:1px;background:#000;"></div>
<div class="b" style="left:26px;top:526px;width:609px;height:1px;background:#000;"></div>
<div class="b" style="left:26px;top:548px;width:609px;height:1px;background:#000;"></div>
<div class="b" style="left:26px;top:570px;width:609px;height:1px;background:#000;"></div>
<div class="b" style="left:26px;top:592px;width:609px;height:1px;background:#000;"></div>
<div class="b" style="left:26px;top:614px;width:609px;height:1px;background:#000;"></div>
<div class="b" style="left:26px;top:636px;width:609px;height:1px;background:#000;"></div>
<div class="b" style="left:26px;top:658px;width:609px;height:1px;background:#000;"></div>
<div class="b" style="left:26px;top:680px;width:609px;height:1px;background:#000;"></div>
<div class="b" style="left:26px;top:702px;width:609px;height:1px;background:#000;"></div>
<div class="b" style="left:26px;top:724px;width:609px;height:1px;background:#000;"></div>
<div class="b" style="left:26px;top:746px;width:609px;height:1px;background:#000;"></div>
<div class="b" style="left:26px;top:768px;width:609px;height:1px;background:#000;"></div>
<div class="b" style="left:26px;top:790px;width:609px;height:1px;background:#000;"></div>
<div class="b" style="left:26px;top:812px;width:609px;height:1px;background:#000;"></div>
<div class="b" style="left:26px;top:834px;width:609px;height:1px;background:#000;"></div>
<div class="b" style="left:26px;top:856px;width:609px;height:1px;background:#000;"></div>
<div class="b" style="left:26px;top:878px;width:609px;height:1px;background:#000;"></div>
<div class="b" style="left:26px;top:900px;width:609px;height:1px;background:#000;"></div>
<div class="b" style="left:26px;top:922px;width:609px;height:1px;background:#000;"></div>
<div class="b" style="left:26px;top:944px;width:609px;height:1px;background:#000;"></div>
<div class="b" style="left:26px;top:966px;width:609px;height:1px;background:#000;"></div>
<div class="b" style="left:26px;top:307px;width:1px;height:660px;background:#000;"></div>
<div class="b" style="left:125px;top:307px;width:1px;height:660px;background:#000;"></div>
<div class="b" style="left:525px;top:307px;width:1px;height:660px;background:#000;"></div>
<div class="b" style="left:634px;top:307px;width:1px;height:660px;background:#000;"></div>
<div class="b" style="left:10.7px;top:447.7px;width:4.6px;height:4.6px;border-radius:50%;background:#1ba1e2"></div>
<span class="t" style="left:753.88px;top:287px;font-size:11.7px;font-weight:normal;letter-spacing:-0.075px;color:#000;">Skratka MÚ</span>
<span class="t" style="left:1026.39px;top:287px;font-size:11.7px;font-weight:normal;letter-spacing:0.062px;color:#000;">Názov MÚ</span>
<span class="t" style="left:1288.46px;top:287px;font-size:11.7px;font-weight:normal;letter-spacing:0.151px;color:#000;">Typ MÚ</span>
<span class="t" style="left:1372.59px;top:287px;font-size:11.7px;font-weight:normal;letter-spacing:0.175px;color:#000;">Hodnota vlastnosti</span>
<div class="b" style="left:713px;top:285px;width:1px;height:24px;background:#e6e6e6;"></div>
<div class="b" style="left:853px;top:285px;width:1px;height:24px;background:#e6e6e6;"></div>
<div class="b" style="left:1253px;top:285px;width:1px;height:24px;background:#e6e6e6;"></div>
<div class="b" style="left:1361px;top:285px;width:1px;height:24px;background:#e6e6e6;"></div>
<div class="b" style="left:1480px;top:285px;width:1px;height:24px;background:#e6e6e6;"></div>
<div class="b" style="left:715px;top:310px;width:765px;height:22px;background:#479dff;"></div>
<div class="b" style="left:714px;top:332px;width:767px;height:1px;background:#000;"></div>
<div class="b" style="left:714px;top:356px;width:767px;height:1px;background:#000;"></div>
<div class="b" style="left:714px;top:309px;width:1px;height:48px;background:#000;"></div>
<div class="b" style="left:853px;top:309px;width:1px;height:48px;background:#000;"></div>
<div class="b" style="left:1253px;top:309px;width:1px;height:48px;background:#000;"></div>
<div class="b" style="left:1361px;top:309px;width:1px;height:48px;background:#000;"></div>
<div class="b" style="left:1480px;top:309px;width:1px;height:48px;background:#000;"></div>
<div class="b" style="left:714px;top:309px;width:767px;height:0px;background:transparent;border-top:1px dotted #000;"></div>
<span class="t" style="left:718.49px;top:309px;font-size:11.7px;font-weight:normal;letter-spacing:-0.349px;color:#fff;">HNED</span>
<span class="t" style="left:857.59px;top:309px;font-size:11.7px;font-weight:normal;letter-spacing:0.047px;color:#fff;">Mzdové zvýhodnenie za prácu v nedeľu 100%</span>
<span class="t" style="left:1257.19px;top:309px;font-size:11.7px;font-weight:normal;letter-spacing:-0.942px;color:#fff;">HRUBEPRIPL</span>
<span class="t" style="left:1365.22px;top:309px;font-size:11.7px;font-weight:normal;color:#fff;">A</span>
<span class="t" style="left:718.49px;top:333px;font-size:11.7px;font-weight:normal;letter-spacing:-0.731px;color:#000;">HNEDP</span>
<span class="t" style="left:857.59px;top:333px;font-size:11.7px;font-weight:normal;letter-spacing:0.036px;color:#000;">Mzdové zvýhodnenie za prácu v nedeľu pravidel. 90%</span>
<span class="t" style="left:1257.19px;top:333px;font-size:11.7px;font-weight:normal;letter-spacing:-0.942px;color:#000;">HRUBEPRIPL</span>
<span class="t" style="left:1365.22px;top:333px;font-size:11.7px;font-weight:normal;color:#000;">A</span>
<div class="b" style="left:698.7px;top:318.7px;width:4.6px;height:4.6px;border-radius:50%;background:#1ba1e2"></div>
<svg style="left:0;top:0" width="1528" height="974"><line x1="616.5" y1="446.7" x2="698" y2="344.8" stroke="#e8161b" stroke-width="4"/><polygon points="709.7,330.3 705.3,351.5 690,339.2" fill="#e8161b"/></svg>
<div class="b" style="left:2px;top:308px;width:23px;height:20px;background:#fefefe;box-sizing:border-box;border:1px solid #cdcdcd;border-radius:3.5px;"></div>
<svg style="left:7px;top:312px" width="12" height="12" viewBox="0 0 12 12"><path d="M1.6 3.4H10.4L7.2 7V10.8H5.4V7Z" fill="#e9e9ff" stroke="#7474dc" stroke-width="0.9"/><rect x="0.7" y="0.7" width="10.8" height="10.8" fill="none" stroke="#26265e" stroke-width="1.4"/><path d="M1 11L11 1" stroke="#26265e" stroke-width="1.6"/></svg>
<svg style="left:129px;top:311px" width="12" height="12" viewBox="0 0 12 12"><rect x="0.5" y="0.5" width="11" height="11" fill="#fdfdff" stroke="#5858b8" stroke-width="1"/><text x="6" y="10.2" text-anchor="middle" font-family="Liberation Sans, sans-serif" font-size="11" fill="#8a8ad8">A</text></svg>
<svg style="left:529px;top:311px" width="12" height="12" viewBox="0 0 12 12"><rect x="0.5" y="0.5" width="11" height="11" fill="#fdfdff" stroke="#5858b8" stroke-width="1"/><text x="6" y="10.2" text-anchor="middle" font-family="Liberation Sans, sans-serif" font-size="11" fill="#8a8ad8">A</text></svg>
</body></html>
